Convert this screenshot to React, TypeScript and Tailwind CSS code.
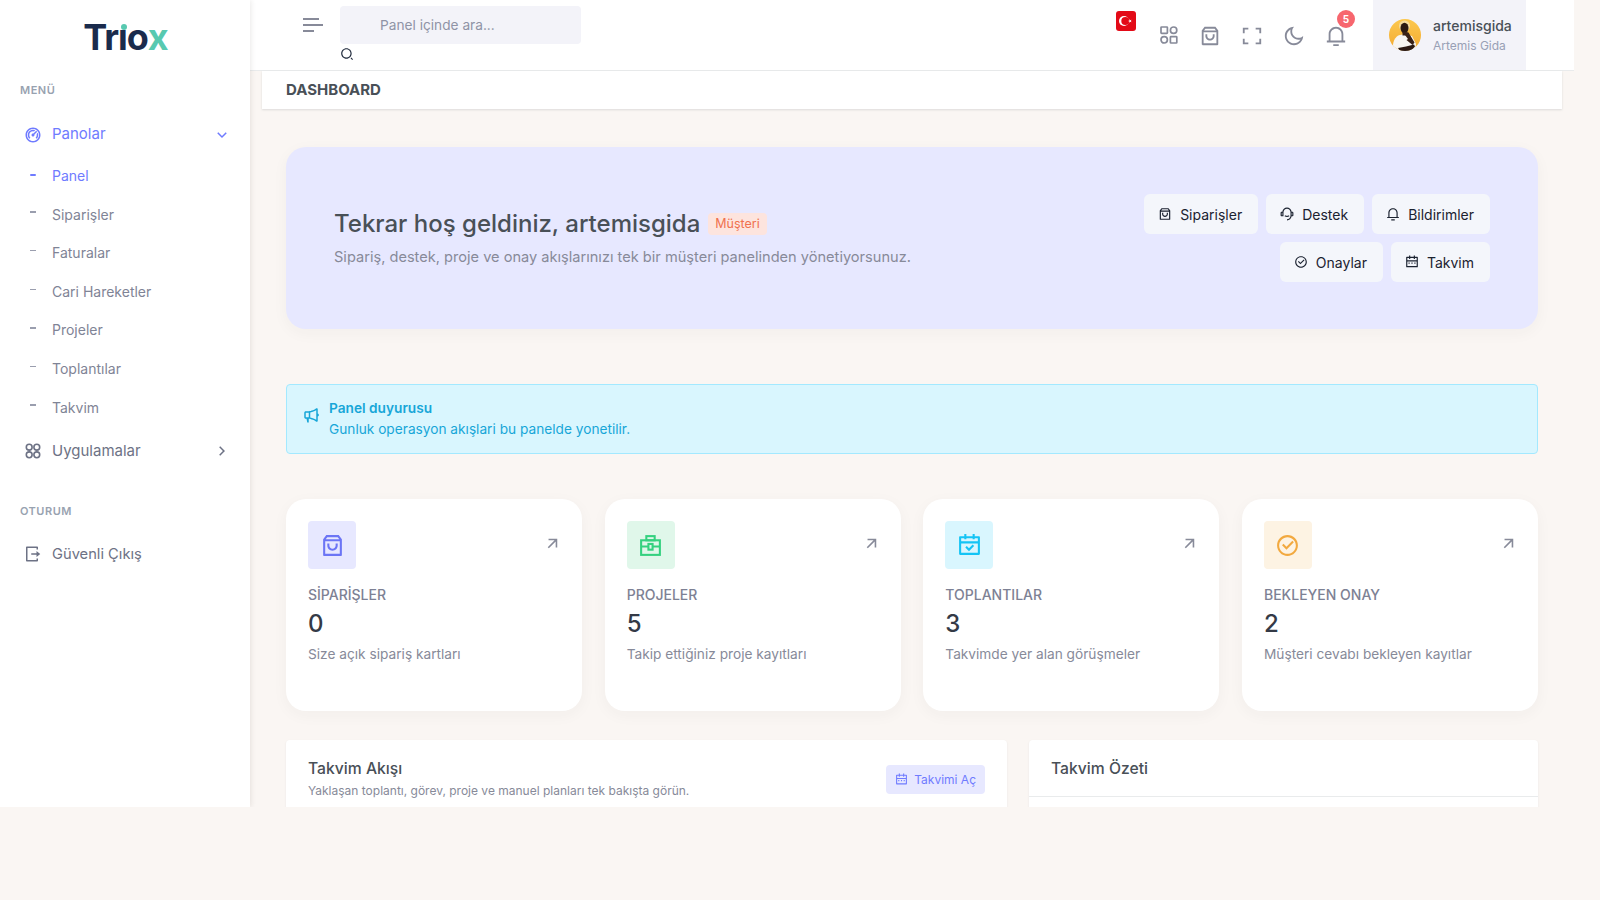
import type { ComponentType, ReactNode } from 'react'
import {
  RiArrowDownSLine,
  RiArrowRightSLine,
  RiArrowRightUpLine,
  RiCalendar2Line,
  RiCalendarCheckLine,
  RiCheckboxCircleLine,
  RiCustomerService2Line,
  RiDashboard2Line,
  RiFullscreenLine,
  RiLogoutBoxRLine,
  RiMegaphoneLine,
  RiMoonLine,
  RiNotification3Line,
  RiSearch2Line,
  RiShoppingBag3Line,
} from 'react-icons/ri'

type Icon = ComponentType<{ className?: string }>

function BriefcaseIcon({ className }: { className?: string }) {
  return (
    <svg viewBox="0 0 24 24" width="1em" height="1em" className={className} fill="none" stroke="currentColor" strokeWidth="2">
      <rect x="8" y="3" width="8" height="4" />
      <rect x="3" y="7" width="18" height="14" />
      <path d="M3 13h7M14 13h7" />
      <rect x="10" y="10.500" width="4" height="5.500" />
    </svg>
  )
}

const SUB_ITEMS = ['Siparişler', 'Faturalar', 'Cari Hareketler', 'Projeler', 'Toplantılar', 'Takvim']

const STATS: { title: string; value: string; desc: string; icon: Icon; box: string; color: string }[] = [
  { title: 'SİPARİŞLER', value: '0', desc: 'Size açık sipariş kartları', icon: RiShoppingBag3Line, box: 'bg-[#e7e8ff]', color: 'text-[#6c75f5]' },
  { title: 'PROJELER', value: '5', desc: 'Takip ettiğiniz proje kayıtları', icon: BriefcaseIcon, box: 'bg-[#e0f7ea]', color: 'text-[#34d17f]' },
  { title: 'TOPLANTILAR', value: '3', desc: 'Takvimde yer alan görüşmeler', icon: RiCalendarCheckLine, box: 'bg-[#d9f6fe]', color: 'text-[#14c4f5]' },
  { title: 'BEKLEYEN ONAY', value: '2', desc: 'Müşteri cevabı bekleyen kayıtlar', icon: RiCheckboxCircleLine, box: 'bg-[#fdf3e3]', color: 'text-[#f2a93f]' },
]

function HeroButton({ icon: I, children }: { icon: Icon; children: ReactNode }) {
  return (
    <button className="flex h-[40px] items-center gap-[8px] rounded-[6px] bg-[#f4f6fb] pl-[14px] pr-[16px] text-[14px] text-[#1b2230]">
      <I className="text-[14px]" />
      {children}
    </button>
  )
}

function AppsCircles() {
  return (
    <svg viewBox="0 0 16 16" className="h-[16px] w-[16px]" fill="none" stroke="currentColor" strokeWidth="1.6">
      <circle cx="4.2" cy="4.2" r="2.9" />
      <circle cx="11.8" cy="4.2" r="2.9" />
      <circle cx="4.2" cy="11.8" r="2.9" />
      <circle cx="11.8" cy="11.8" r="2.9" />
    </svg>
  )
}

function AppsMixed() {
  return (
    <svg viewBox="0 0 18 18" className="mr-[1px] h-[18px] w-[18px] translate-y-[1px]" fill="none" stroke="currentColor" strokeWidth="1.7">
      <rect x="1" y="1" width="6.4" height="6.4" rx="0.6" />
      <circle cx="13.6" cy="4.2" r="3.2" />
      <circle cx="4.2" cy="13.8" r="3.2" />
      <rect x="10.4" y="10.6" width="6.4" height="6.4" rx="0.6" />
    </svg>
  )
}

function Sidebar() {
  return (
    <aside className="relative z-10 flex w-[250px] shrink-0 flex-col bg-white shadow-[1px_0_5px_rgba(60,50,40,0.10)]">
      {/* Logo */}
      <div className="flex h-[74px] items-center justify-center pl-[1px] text-[36px] font-bold tracking-[-1px] text-[#1a2b4c]">
        <span>Tr</span>
        <span className="relative">
          ı<span className="absolute left-[3px] top-[14px] h-[6px] w-[6px] rounded-full bg-[#58c9b0]" />
        </span>
        <span>o</span>
        <span className="text-[#58c9b0]">x</span>
      </div>

      <div className="mt-[8px] pl-[20px] text-[11px] font-semibold tracking-[0.5px] text-[#98a2b0]">MENÜ</div>

      <div className="mt-[26px] flex h-[20px] items-center pl-[24px] pr-[19px] text-[#6f7bff]">
        <RiDashboard2Line className="text-[18px]" />
        <span className="ml-[10px] flex-1 text-[15px]">Panolar</span>
        <RiArrowDownSLine className="text-[18px]" />
      </div>

      <div className="mt-[21px] flex h-[20px] items-center pl-[30px] text-[14px] text-[#6f7bff]">
        <span className="h-[2px] w-[6px] -translate-y-[1px] rounded bg-[#6f7bff]" />
        <span className="ml-[16px]">Panel</span>
      </div>
      <div className="flex flex-col">
        {SUB_ITEMS.map((item) => (
          <div key={item} className="mt-[18.6px] flex h-[20px] items-center pl-[30px] text-[14px] text-[#7f8496]">
            <span className="h-[1.5px] w-[6px] -translate-y-[2px] bg-[#9a9eae]" />
            <span className="ml-[16px]">{item}</span>
          </div>
        ))}
      </div>

      <div className="mt-[24px] flex h-[20px] items-center pl-[25px] pr-[19px] text-[#6d7285]">
        <AppsCircles />
        <span className="ml-[11px] flex-1 text-[15px]">Uygulamalar</span>
        <RiArrowRightSLine className="text-[18px]" />
      </div>

      <div className="mt-[42px] pl-[20px] text-[11px] font-semibold tracking-[0.5px] text-[#98a2b0]">OTURUM</div>

      <div className="mt-[24px] flex h-[20px] items-center pl-[23px] text-[#6d7285]">
        <RiLogoutBoxRLine className="text-[18px]" />
        <span className="ml-[11px] text-[14.700px]">Güvenli Çıkış</span>
      </div>
    </aside>
  )
}

function Hamburger() {
  return (
    <svg viewBox="0 0 20 14" className="h-[14px] w-[20px]" fill="#878a99">
      <rect x="0" y="0" width="16" height="2" />
      <rect x="0" y="6" width="20" height="2" />
      <rect x="0" y="12" width="11" height="2" />
    </svg>
  )
}

function Flag() {
  return (
    <svg viewBox="0 0 20 20" className="h-[20px] w-[20px]">
      <rect width="20" height="20" rx="3" fill="#e30a17" />
      <circle cx="8" cy="10" r="5" fill="#fff" />
      <circle cx="9.3" cy="10" r="4" fill="#e30a17" />
      <polygon points="12,10 15.6,8.8 13.4,11.9 13.4,8.1 15.6,11.2" fill="#fff" />
    </svg>
  )
}

function Avatar() {
  return (
    <svg viewBox="0 0 32 32" className="h-[32px] w-[32px] rounded-full">
      <defs>
        <linearGradient id="av" x1="0" y1="0" x2="0" y2="1">
          <stop offset="0" stopColor="#fcc84f" />
          <stop offset="1" stopColor="#f3a92e" />
        </linearGradient>
      </defs>
      <rect width="32" height="32" fill="url(#av)" />
      <circle cx="15.500" cy="7" r="5.500" fill="#f6dc9c" />
      <path d="M4 32C3 23 6 17 11 16l5-1 7 2 4 8-1 7z" fill="#f7f5f1" />
      <ellipse cx="15.500" cy="9" rx="4" ry="5.200" fill="#2c1a12" />
      <rect x="13.500" y="13" width="4" height="3.500" fill="#3a2216" />
      <path d="M17.500 13l2 .5 6 10-2 2.500-6-5 1.500-1-3-4z" fill="#3a2216" />
      <path d="M9 29l8-1.500 8-2 1 2-4 4.500H11z" fill="#2c1a12" />
    </svg>
  )
}

function Header() {
  return (
    <header className="flex h-[71px] shrink-0 items-start border-b border-[#e9ebec] bg-white">
      <div className="ml-[53px] mt-[18px]">
        <Hamburger />
      </div>
      <div className="ml-[17px] flex w-[241px] flex-col items-start">
        <div className="mt-[6px] flex h-[38px] w-full items-center rounded-[4px] bg-[#f3f3f9] pl-[40px] text-[13.7px] text-[#8f93a6]">
          Panel içinde ara...
        </div>
        <RiSearch2Line className="mt-[3px] text-[14px] text-[#212b3d]" />
      </div>

      <div className="ml-auto mt-[11px]">
        <Flag />
      </div>
      <div className="ml-[24px] mt-[25px] flex gap-[20px] text-[22px] text-[#878a99]">
        <AppsMixed />
        <RiShoppingBag3Line />
        <RiFullscreenLine />
        <RiMoonLine />
        <span className="relative">
          <RiNotification3Line />
          <span className="absolute -top-[15px] left-[12px] flex h-[18px] w-[18px] items-center justify-center rounded-full bg-[#f7666e] text-[10px] font-bold text-white">
            5
          </span>
        </span>
      </div>
      <div className="ml-[26px] flex h-[70px] w-[153px] items-center bg-[#f3f3f9] pl-[16px]">
        <Avatar />
        <div className="ml-[12px] pt-[2px]">
          <div className="text-[14px] font-medium leading-[20px] text-[#495057]">artemisgida</div>
          <div className="text-[12px] leading-[20px] text-[#98a0b5]">Artemis Gida</div>
        </div>
      </div>
      <div className="w-[48px]" />
    </header>
  )
}

function StatCard({ title, value, desc, icon: I, box, color }: (typeof STATS)[number]) {
  return (
    <div className="h-[212px] rounded-[20px] bg-white px-[22px] pt-[22px] shadow-[0_4px_16px_rgba(60,50,40,0.04)]">
      <div className="flex items-center justify-between">
        <div className={`flex h-[48px] w-[48px] items-center justify-center rounded-[4px] ${box} ${color}`}>
          <I className="text-[25px]" />
        </div>
        <RiArrowRightUpLine className="-mr-[2px] -translate-y-[2px] text-[19px] text-[#878a99]" />
      </div>
      <div className="mt-[16px] text-[14px] font-medium leading-[20px] text-[#7d8194]">{title}</div>
      <div className="mt-[2px] text-[24px] font-medium leading-[34px] text-[#343a46]">{value}</div>
      <div className="mt-[3px] text-[13.7px] leading-[20px] text-[#878a99]">{desc}</div>
    </div>
  )
}

export default function App() {
  return (
    <div className="min-h-[900px] bg-[#faf6f3] font-['Inter',sans-serif]">
      <div className="flex h-[807px] w-[1574px] overflow-hidden bg-[#faf6f3]">
        <Sidebar />
        <main className="flex min-w-0 flex-1 flex-col">
          <Header />
          <div className="mx-[12px] flex h-[38px] shrink-0 items-center bg-white px-[24px] text-[15px] font-bold text-[#495057] shadow-[0_1px_2px_rgba(56,65,74,0.15)]">
            DASHBOARD
          </div>

          <div className="flex flex-col px-[36px]">
            {/* Hero */}
            <section className="mt-[38px] flex h-[182px] items-center justify-between rounded-[20px] bg-[#e7e8ff] pl-[48px] pr-[48px] shadow-[0_4px_16px_rgba(60,50,40,0.04)]">
              <div>
                <div className="flex items-center gap-[8px]">
                  <h1 className="text-[24px] font-medium leading-[32px] text-[#495057]">Tekrar hoş geldiniz, artemisgida</h1>
                  <span className="rounded-[4px] bg-[#fde4de] px-[7px] py-[2px] text-[12.500px] text-[#f0714f]">Müşteri</span>
                </div>
                <p className="mt-[6px] text-[14.600px] leading-[22px] text-[#878a99]">
                  Sipariş, destek, proje ve onay akışlarınızı tek bir müşteri panelinden yönetiyorsunuz.
                </p>
              </div>
              <div className="flex w-[372px] flex-wrap justify-end gap-[8px]">
                <HeroButton icon={RiShoppingBag3Line}>Siparişler</HeroButton>
                <HeroButton icon={RiCustomerService2Line}>Destek</HeroButton>
                <HeroButton icon={RiNotification3Line}>Bildirimler</HeroButton>
                <HeroButton icon={RiCheckboxCircleLine}>Onaylar</HeroButton>
                <HeroButton icon={RiCalendar2Line}>Takvim</HeroButton>
              </div>
            </section>

            {/* Alert */}
            <section className="mt-[55px] flex h-[70px] items-center rounded-[4px] border border-[#a3e9ff] bg-[#d9f6fe] pl-[15px] text-[13.700px] text-[#17a6d8]">
              <RiMegaphoneLine className="-translate-y-[4px] text-[18px]" />
              <div className="ml-[9px]">
                <div className="font-semibold leading-[21px]">Panel duyurusu</div>
                <div className="leading-[21px]">Gunluk operasyon akışlari bu panelde yonetilir.</div>
              </div>
            </section>

            {/* Stats */}
            <section className="mt-[45px] grid grid-cols-4 gap-[22.67px]">
              {STATS.map((s) => (
                <StatCard key={s.title} {...s} />
              ))}
            </section>

            {/* Bottom */}
            <section className="mt-[29px] grid grid-cols-[721px_509px] gap-[22px]">
              <div className="h-[200px] rounded-[4px] bg-white px-[22px] pt-[18px] shadow-[0_1px_2px_rgba(56,65,74,0.10)]">
                <div className="flex items-center justify-between">
                  <div>
                    <div className="text-[15.700px] font-medium leading-[22px] text-[#495057]">Takvim Akışı</div>
                    <div className="pt-[1px] text-[12px] leading-[20px] text-[#878a99]">
                      Yaklaşan toplantı, görev, proje ve manuel planları tek bakışta görün.
                    </div>
                  </div>
                  <div className="flex h-[29px] items-center gap-[6px] rounded-[4px] bg-[#e7e8ff] px-[9px] text-[12px] text-[#6f7bff]">
                    <RiCalendar2Line className="text-[13px]" />
                    Takvimi Aç
                  </div>
                </div>
              </div>
              <div className="h-[200px] rounded-[4px] bg-white shadow-[0_1px_2px_rgba(56,65,74,0.10)]">
                <div className="flex h-[57px] items-center border-b border-[#e9ebec] px-[22px] pt-[1px] text-[15.700px] font-medium text-[#495057]">
                  Takvim Özeti
                </div>
              </div>
            </section>
          </div>
        </main>
      </div>
    </div>
  )
}
